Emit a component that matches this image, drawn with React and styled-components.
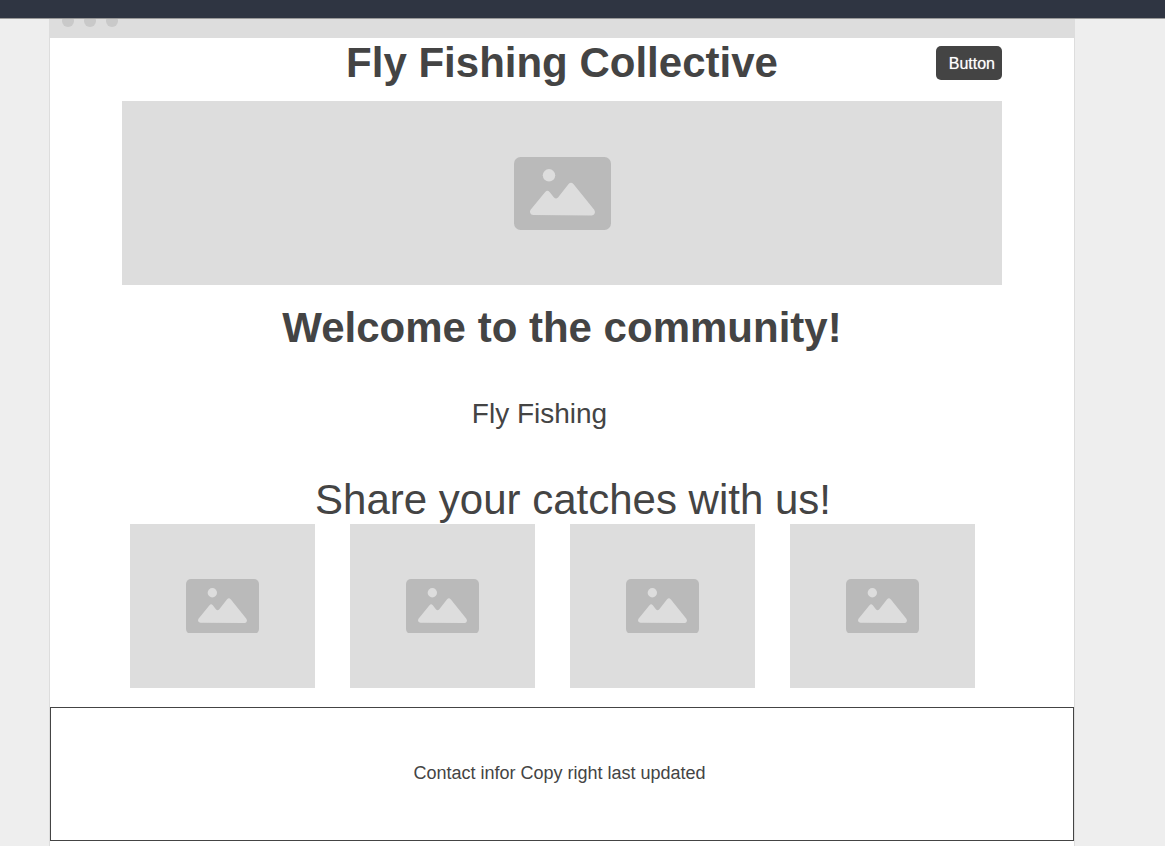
import React from "react";
import styled, { createGlobalStyle } from "styled-components";

const GlobalStyle = createGlobalStyle`
  * { box-sizing: border-box; }
  body {
    margin: 0;
    background: #eee;
    color: #444;
    font-family: "Liberation Sans", Arial, sans-serif;
  }
`;

const Page = styled.div`
  display: flex;
  flex-direction: column;
  min-height: 100vh;
`;

const TopBar = styled.div`
  height: 19px;
  background: #2f3542;
  border-bottom: 1px solid #999;
`;

const Canvas = styled.div`
  flex: 1;
  display: flex;
  padding: 0 90px 0 49px;
`;

const BrowserFrame = styled.div`
  flex: 1;
  min-width: 0;
  background: #fff;
  border: solid #ddd;
  border-width: 0 1px;
`;

const ChromeBar = styled.div`
  display: flex;
  align-items: flex-start;
  height: 19px;
  padding: 0 12px;
  background: #ddd;
`;

const WindowDots = styled.svg`
  display: block;
  width: 56px;
  height: 8px;
`;

const Header = styled.header`
  display: grid;
  grid-template-columns: 1fr auto 1fr;
  align-items: start;
  height: 63px;
  padding: 0 72px;
`;

const Title = styled.h1`
  grid-column: 2;
  margin: 0;
  font-size: 42px;
  line-height: 50px;
`;

const Button = styled.button`
  justify-self: end;
  height: 34px;
  margin-top: 8px;
  padding: 2px 7px 0 13px;
  border: 0;
  border-radius: 5px;
  background: #444;
  color: #fff;
  font-family: inherit;
  font-size: 16px;
  line-height: 32px;
  text-shadow: 0 0 1px rgba(255, 255, 255, 0.6);
`;

const ImageBlock = styled.div`
  display: flex;
  align-items: center;
  justify-content: center;
  flex: 1;
  height: ${(p) => p.$height}px;
  background: #ddd;

  svg {
    display: block;
    width: ${(p) => p.$icon}px;
    height: auto;
  }
`;

const Hero = styled.div`
  display: flex;
  padding: 0 72px;
`;

const Welcome = styled.h2`
  margin: 18px 0 0;
  font-size: 42px;
  line-height: 50px;
  text-align: center;
`;

const Topic = styled.p`
  margin: 44px 0 0;
  padding-right: 45px;
  font-size: 28px;
  line-height: 34px;
  text-align: center;
`;

const ShareHeading = styled.h2`
  margin: 45px 0 0;
  padding-left: 22px;
  font-size: 42px;
  font-weight: 400;
  line-height: 48px;
  text-align: center;
`;

const Gallery = styled.div`
  display: flex;
  gap: 35px;
  padding: 0 99px 0 80px;
`;

const Footer = styled.footer`
  display: flex;
  align-items: center;
  justify-content: center;
  height: 134px;
  margin: 19px 0 5px;
  padding: 0 5px 2px 0;
  border: 1px solid #444;
  font-size: 18px;
  line-height: 22px;
`;

function ImageIcon() {
  return (
    <svg viewBox="0 0 97 73" aria-hidden="true">
      <rect width="97" height="73" rx="6.5" fill="#bababa" />
      <circle cx="35" cy="18.3" r="6.2" fill="#ddd" />
      <path
        d="M16.6 52.8 L31.2 35 Q33.4 32.4 35.6 35 L40 40.4 Q42 42.6 44 40.4 L54.6 27 Q57 24.3 59.4 27 L80.2 52.8 Q81.8 55.2 80.4 57 Q79.6 58.4 77.6 58.4 L19.2 58 Q17 57.8 16.2 56 Q15.6 54.4 16.6 52.8 Z"
        fill="#ddd"
      />
    </svg>
  );
}

const catches = ["first", "second", "third", "fourth"];

export default function App() {
  return (
    <Page>
      <GlobalStyle />
      <TopBar />
      <Canvas>
        <BrowserFrame>
          <ChromeBar>
            <WindowDots viewBox="0 0 56 8" aria-hidden="true">
              <g fill="#c9c9c9">
                <circle cx="6" cy="2" r="6" />
                <circle cx="28" cy="2" r="6" />
                <circle cx="50" cy="2" r="6" />
              </g>
            </WindowDots>
          </ChromeBar>
          <Header>
            <Title>Fly Fishing Collective</Title>
            <Button type="button">Button</Button>
          </Header>
          <main>
            <Hero>
              <ImageBlock $height={184} $icon={97}>
                <ImageIcon />
              </ImageBlock>
            </Hero>
            <Welcome>Welcome to the community!</Welcome>
            <Topic>Fly Fishing</Topic>
            <ShareHeading>Share your catches with us!</ShareHeading>
            <Gallery>
              {catches.map((id) => (
                <ImageBlock key={id} $height={164} $icon={73}>
                  <ImageIcon />
                </ImageBlock>
              ))}
            </Gallery>
          </main>
          <Footer>Contact infor Copy right last updated</Footer>
        </BrowserFrame>
      </Canvas>
    </Page>
  );
}
